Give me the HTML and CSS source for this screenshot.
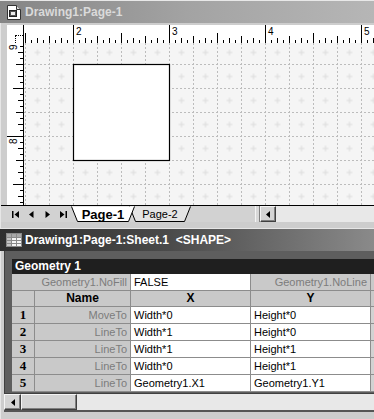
FILE: index.html
```html
<!DOCTYPE html>
<html>
<head>
<meta charset="utf-8">
<link rel="stylesheet" href="styles.css">
</head>
<body>
<div class="app">
  <section class="win-drawing">
    <header class="title title-inactive">
      <svg class="ticon" width="16" height="15" viewBox="0 0 16 15">
        <path d="M1.5 0.5h9l4 4v10h-13z" fill="#fff" stroke="#333"/>
        <path d="M10.5 0.5v4h4" fill="#ddd" stroke="#333"/>
        <rect x="3.5" y="5.5" width="7" height="6" fill="#555" stroke="#222"/>
        <rect x="5" y="7" width="4" height="3" fill="#eee"/>
      </svg>
      <span class="title-text">Drawing1:Page-1</span>
    </header>
    <div class="drawing-body">
      <div class="ruler-row">
        <div class="ruler-corner"><span class="corner-v"></span></div>
        <div class="hruler">
          <span class="hseg hseg-first"></span>
          <span class="hseg">2</span>
          <span class="hseg">3</span>
          <span class="hseg">4</span>
          <span class="hseg">5</span>
        </div>
      </div>
      <div class="canvas-row">
        <div class="vruler">
          <span class="vlabel">9</span>
          <span class="vlabel vlabel-8">8</span>
        </div>
        <div class="canvas">
          <svg class="page" width="351" height="162" viewBox="0 0 351 162">
            <defs>
              <pattern id="plus" x="10.5" y="6.5" width="24" height="24" patternUnits="userSpaceOnUse">
                <path d="M0 3h6M3 0v6" stroke="#dcdcdc" stroke-width="1"/>
              </pattern>
            </defs>
            <rect width="351" height="162" fill="#f5f5f5"/>
            <rect width="351" height="162" fill="url(#plus)"/>
            <g stroke="#bcbcbc" stroke-width="1" stroke-dasharray="2 2">
              <path d="M1.5 0v162M25.5 0v162M49.5 0v162M73.5 0v162M97.5 0v162M121.5 0v162M145.5 0v162M169.5 0v162M193.5 0v162M217.5 0v162M241.5 0v162M265.5 0v162M289.5 0v162M313.5 0v162M337.5 0v162"/>
              <path d="M0 21.5h351M0 45.5h351M0 69.5h351M0 93.5h351M0 117.5h351M0 141.5h351"/>
            </g>
            <rect x="49.5" y="21.5" width="96" height="96" fill="#fff" stroke="#000" stroke-width="1.2"/>
          </svg>
        </div>
      </div>
      <div class="tabrow">
        <div class="navbtns">
          <span class="nav"><svg width="7" height="7" viewBox="0 0 7 7"><path d="M0 0h1.5v7H0zM7 0v7L2.5 3.5z" fill="#000"/></svg></span>
          <span class="nav"><svg width="5" height="7" viewBox="0 0 5 7"><path d="M4.5 0v7L0 3.5z" fill="#000"/></svg></span>
          <span class="nav"><svg width="5" height="7" viewBox="0 0 5 7"><path d="M0.5 0v7L5 3.5z" fill="#000"/></svg></span>
          <span class="nav"><svg width="7" height="7" viewBox="0 0 7 7"><path d="M0 0v7l4.5-3.5zM5.5 0H7v7H5.5z" fill="#000"/></svg></span>
        </div>
        <div class="tabs">
          <div class="tab tab-active">
            <svg class="tab-shape" width="64" height="16" viewBox="0 0 64 16"><path d="M0.5 0.5L6.5 15.5H57.5L63.5 0.5" fill="#fff" stroke="#000"/></svg>
            <span class="tab-label">Page-1</span>
          </div>
          <div class="tab tab-inactive">
            <svg class="tab-shape" width="62" height="16" viewBox="0 0 62 16"><path d="M0.5 0.5L6.5 15.5H55.5L61.5 0.5" fill="#e4e4e4" stroke="#000"/></svg>
            <span class="tab-label">Page-2</span>
          </div>
        </div>
        <div class="tab-filler"></div>
        <div class="splitter"></div>
        <div class="sbtn"><svg width="4" height="7" viewBox="0 0 4 7"><path d="M4 0v7L0 3.5z" fill="#000"/></svg></div>
        <div class="strack"></div>
      </div>
    </div>
  </section>

  <section class="win-sheet">
    <header class="title title-active">
      <svg class="ticon" width="16" height="14" viewBox="0 0 16 14">
        <rect x="0.5" y="0.5" width="15" height="13" fill="#f4f4f4" stroke="#8a8a8a"/>
        <rect x="1" y="1" width="14" height="3" fill="#a8a8a8"/>
        <rect x="1" y="4" width="4" height="9" fill="#c4c4c4"/>
        <path d="M0.5 4.5h15M0.5 7.5h15M0.5 10.5h15M5.5 0.5v13M10.5 0.5v13" stroke="#8a8a8a"/>
      </svg>
      <span class="title-text">Drawing1:Page-1:Sheet.1&nbsp; &lt;SHAPE&gt;</span>
    </header>
    <div class="sheet-body">
      <div class="sheet-client">
        <div class="sheet">
          <div class="sec-head">Geometry 1</div>

          <div class="cell gray label span2">Geometry1.NoFill</div>
          <div class="cell val">FALSE</div>
          <div class="cell gray label">Geometry1.NoLine</div>
          <div class="cell gray"></div>

          <div class="cell gray"></div>
          <div class="cell gray head">Name</div>
          <div class="cell gray head">X</div>
          <div class="cell gray head">Y</div>
          <div class="cell gray"></div>

          <div class="cell gray num">1</div>
          <div class="cell gray label">MoveTo</div>
          <div class="cell val">Width*0</div>
          <div class="cell val">Height*0</div>
          <div class="cell extra"></div>

          <div class="cell gray num">2</div>
          <div class="cell gray label">LineTo</div>
          <div class="cell val">Width*1</div>
          <div class="cell val">Height*0</div>
          <div class="cell extra"></div>

          <div class="cell gray num">3</div>
          <div class="cell gray label">LineTo</div>
          <div class="cell val">Width*1</div>
          <div class="cell val">Height*1</div>
          <div class="cell extra"></div>

          <div class="cell gray num">4</div>
          <div class="cell gray label">LineTo</div>
          <div class="cell val">Width*0</div>
          <div class="cell val">Height*1</div>
          <div class="cell extra"></div>

          <div class="cell gray num">5</div>
          <div class="cell gray label">LineTo</div>
          <div class="cell val">Geometry1.X1</div>
          <div class="cell val">Geometry1.Y1</div>
          <div class="cell extra"></div>
        </div>
      </div>
      <div class="hscroll">
        <div class="sbtn sbtn-big"><svg width="4" height="7" viewBox="0 0 4 7"><path d="M4 0v7L0 3.5z" fill="#000"/></svg></div>
        <div class="thumb"></div>
        <div class="strack"></div>
      </div>
      <div class="bottom-frame"></div>
    </div>
  </section>
</div>
</body>
</html>
```

FILE: styles.css
```css
* { box-sizing: border-box; }
html, body { margin: 0; padding: 0; }
body {
  width: 374px;
  height: 419px;
  overflow: hidden;
  background: #cfcfcf;
  font-family: "Liberation Sans", Arial, sans-serif;
}
.app {
  width: 374px;
  height: 419px;
  display: flex;
  flex-direction: column;
  overflow: hidden;
}

/* ---------- title bars ---------- */
.title {
  height: 22px;
  flex: none;
  display: flex;
  align-items: center;
  gap: 3px;
  padding-left: 6px;
  font-weight: bold;
  font-size: 12px;
  white-space: nowrap;
}
.title-inactive {
  background: linear-gradient(to right, #858585, #a3a3a3 50%, #b6b6b6);
  color: #dadada;
}
.title-active {
  background: linear-gradient(to right, #2e2e2e, #4a4a4a 45%, #8a8a8a);
  color: #ffffff;
}
.ticon { flex: none; }

/* ---------- drawing window ---------- */
.win-drawing {
  height: 228px;
  flex: none;
  display: flex;
  flex-direction: column;
  border-top: 1px solid #e8e8e8;
}
.drawing-body {
  flex: 1;
  display: flex;
  flex-direction: column;
  padding: 2px 0 0 6px;
  background: #cdcdcd;
  border-left: 1px solid #e6e6e6;
}
.ruler-row {
  height: 18px;
  display: flex;
  flex: none;
}
.ruler-corner {
  width: 17px;
  flex: none;
  background: #fff;
  border-right: 1px solid #000;
  display: flex;
  flex-direction: column;
  justify-content: flex-end;
  align-items: flex-end;
}
.corner-v {
  width: 8px;
  height: 8px;
  border-left: 1px dotted #000;
  border-top: 1px dotted #000;
}
.hruler {
  flex: 1;
  display: flex;
  background-color: #fff;
  background-image:
    linear-gradient(to right, #000 1px, transparent 1px),
    linear-gradient(to right, #000 1px, transparent 1px),
    linear-gradient(to right, #000 1px, transparent 1px),
    linear-gradient(to right, #000 1px, transparent 1px),
    linear-gradient(to right, #000 1px, transparent 1px);
  background-size: 96px 18px, 48px 10px, 24px 7px, 12px 5px, 6px 3px;
  background-position: 49px 100%, 1px 100%, 1px 100%, 1px 100%, 1px 100%;
  background-repeat: repeat-x;
  font-size: 10px;
  line-height: 11px;
  color: #000;
  overflow: hidden;
}
.hseg {
  flex: none;
  width: 96px;
  padding: 1px 0 0 3px;
}
.hseg-first { width: 49px; }

.canvas-row {
  height: 162px;
  flex: none;
  display: flex;
}
.vruler {
  width: 17px;
  flex: none;
  background-color: #fff;
  border-right: 1px solid #000;
  background-image:
    linear-gradient(to bottom, #000 1px, transparent 1px),
    linear-gradient(to bottom, #000 1px, transparent 1px),
    linear-gradient(to bottom, #000 1px, transparent 1px),
    linear-gradient(to bottom, #000 1px, transparent 1px),
    linear-gradient(to bottom, #000 1px, transparent 1px);
  background-size: 16px 96px, 10px 48px, 7px 24px, 5px 12px, 3px 6px;
  background-position: 100% 93px, 100% 45px, 100% 21px, 100% 9px, 100% 3px;
  background-repeat: repeat-y;
  display: flex;
  flex-direction: column;
  padding-left: 2px;
  font-size: 10px;
  overflow: hidden;
}
.vlabel {
  writing-mode: vertical-rl;
  transform: rotate(180deg);
  line-height: 10px;
  height: 7px;
  width: 10px;
  display: block;
}
.vlabel-8 { margin-top: 87px; }
.canvas {
  flex: 1;
  overflow: hidden;
  background: #f5f5f5;
}
.page { display: block; }

/* ---------- page tabs ---------- */
.tabrow {
  height: 17px;
  flex: none;
  display: flex;
  background: #d2d2d2;
  border-top: 1px solid #000;
  margin-left: -6px;
  padding-left: 6px;
}
.navbtns {
  display: flex;
  flex: none;
  width: 64px;
}
.nav {
  width: 16px;
  display: flex;
  align-items: center;
  justify-content: center;
}
.tabs {
  display: flex;
  flex: none;
}
.tab {
  position: relative;
  height: 16px;
  display: flex;
  align-items: center;
  justify-content: center;
}
.tab-shape {
  position: absolute;
  left: 0;
  top: 0;
}
.tab-label { position: relative; color: #000; }
.tab-active {
  width: 64px;
  z-index: 2;
  font-weight: bold;
  font-size: 13px;
}
.tab-inactive {
  width: 62px;
  margin-left: -6px;
  z-index: 1;
  font-size: 11px;
}
.tab-filler { flex: none; width: 64px; }
.splitter {
  width: 5px;
  flex: none;
  background: #d8d8d8;
  border-left: 1px solid #f4f4f4;
  border-right: 1px solid #808080;
}
.sbtn {
  width: 16px;
  height: 16px;
  flex: none;
  display: flex;
  align-items: center;
  justify-content: center;
  background: #d4d4d4;
  border: 1px solid;
  border-color: #f4f4f4 #404040 #404040 #f4f4f4;
  box-shadow: inset -1px -1px 0 #808080;
}
.strack {
  flex: 1;
  background: #e8e8e8;
}

/* ---------- shapesheet window ---------- */
.win-sheet {
  flex: 1;
  display: flex;
  flex-direction: column;
  border-top: 1px solid #e6e6e6;
}
.sheet-body {
  flex: 1;
  display: flex;
  flex-direction: column;
  background: #cdcdcd;
  padding-left: 3px;
  border-left: 1px solid #e6e6e6;
}
.sheet-client {
  height: 142px;
  flex: none;
  background: #5e5e5e;
  padding: 8px 0 0 7px;
  border-left: 1px solid #404040;
  overflow: hidden;
}
.sheet {
  display: grid;
  grid-template-columns: 23px 96px 120px 120px 20px;
  grid-template-rows: 15px 17px 16px repeat(5, 17px);
  width: 380px;
}
.sec-head {
  grid-column: 1 / -1;
  background: #1f1f1f;
  color: #fff;
  font-weight: bold;
  font-size: 12px;
  line-height: 15px;
  padding-left: 3px;
}
.cell {
  border-right: 1px solid #8c8c8c;
  border-bottom: 1px solid #8c8c8c;
  font-size: 11px;
  line-height: 16px;
  padding: 0 3px;
  white-space: nowrap;
  overflow: hidden;
  color: #000;
}
.gray { background: #c9c9c9; }
.val { background: #fff; }
.extra { background: #d2d2d2; }
.label { color: #7c7c7c; text-align: right; }
.span2 { grid-column: span 2; }
.head { font-weight: bold; font-size: 12px; text-align: center; line-height: 15px; }
.num { font-weight: bold; text-align: center; font-family: "Liberation Serif", serif; font-size: 13px; }

.hscroll {
  height: 17px;
  flex: none;
  display: flex;
  border-top: 1px solid #404040;
}
.sbtn-big { width: 17px; height: 16px; }
.thumb {
  width: 56px;
  flex: none;
  background: #d4d4d4;
  border: 1px solid;
  border-color: #f4f4f4 #404040 #404040 #f4f4f4;
  box-shadow: inset -1px -1px 0 #808080;
}
.bottom-frame {
  flex: 1;
  border-top: 2px solid #555;
  background: #cdcdcd;
}
```
